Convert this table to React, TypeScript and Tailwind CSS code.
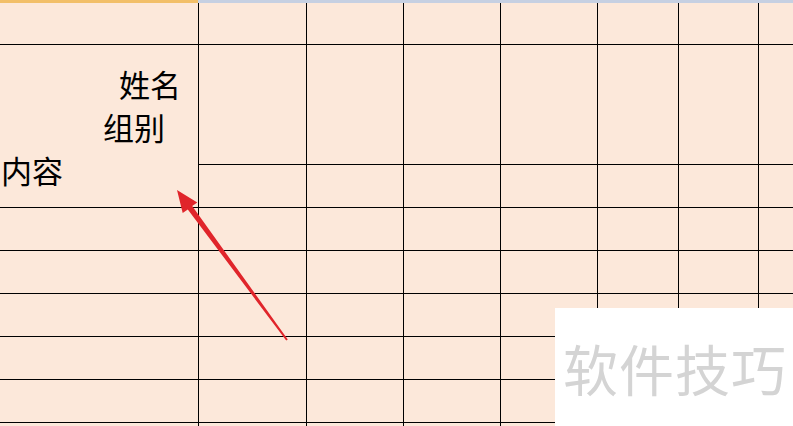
import React from "react";

const cols = ["w-[199px]", "w-[108px]", "w-[97px]", "w-[97px]", "w-[97px]", "w-[81px]", "w-[80px]", "w-[80px]"];

function Cell({ className = "" }: { className?: string }) {
  return <div className={`border-r border-b border-black ${className}`} />;
}

function Row({ h }: { h: string }) {
  return (
    <div className={`flex ${h}`}>
      {cols.map((w, i) => (
        <Cell key={i} className={`${w} shrink-0`} />
      ))}
    </div>
  );
}

export default function App() {
  return (
    <div className="relative h-[426px] w-[793px] overflow-hidden bg-[#fce8da] font-['Noto_Sans_CJK_SC',sans-serif]">
      {/* column header edge */}
      <div className="flex h-[3px]">
        <div className="w-[198px] bg-[#f2bf68]" />
        <div className="flex-1 bg-[#c6d0e2]" />
      </div>

      <Row h="h-[42px]" />

      {/* merged header cell + two rows on the right */}
      <div className="flex h-[163px]">
        <div className="flex w-[199px] shrink-0 flex-col border-r border-b border-black pt-[17px] text-[31px] leading-[43px] text-black">
          <span className="self-end mr-[17px]">姓名</span>
          <span className="self-end mr-[33px]">组别</span>
          <span className="self-start ml-[1px]">内容</span>
        </div>
        <div className="flex flex-col">
          <div className="flex h-[120px]">
            {cols.slice(1).map((w, i) => (
              <Cell key={i} className={`${w} shrink-0`} />
            ))}
          </div>
          <div className="flex h-[43px]">
            {cols.slice(1).map((w, i) => (
              <Cell key={i} className={`${w} shrink-0`} />
            ))}
          </div>
        </div>
      </div>

      {[0, 1, 2, 3, 4, 5].map((i) => (
        <Row key={i} h="h-[43px]" />
      ))}

      {/* red arrow */}
      <svg className="absolute left-0 top-0" width="793" height="426" viewBox="0 0 793 426">
        <polygon
          points="177,190 197.3,202.4 192.2,206 287.8,339.4 286.2,340.6 187.8,209.4 182.7,213"
          fill="#e0252b"
        />
      </svg>

      {/* watermark */}
      <div className="absolute left-[555px] top-[308px] flex h-[118px] w-[238px] items-center bg-white pl-[8px]">
        <span className="text-[55px] leading-none tracking-[1px] text-[#d4d4d4]">软件技巧</span>
      </div>
    </div>
  );
}
